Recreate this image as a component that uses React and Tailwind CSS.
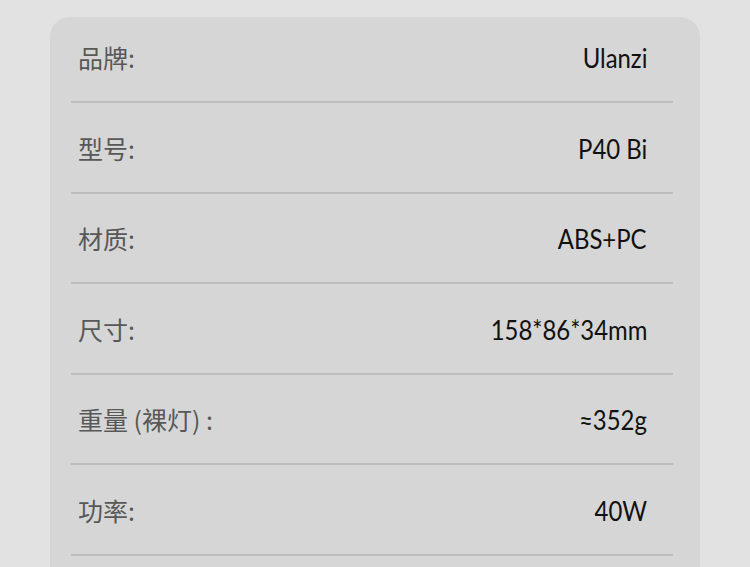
import React from "react";

const rows = [
  ["品牌:", "Ulanzi"],
  ["型号:", "P40 Bi"],
  ["材质:", "ABS+PC"],
  ["尺寸:", "158*86*34mm"],
  ["重量 (裸灯) :", "≈352g"],
  ["功率:", "40W"],
];

const pts = ["pt-0", "pt-[5px]", "pt-[4px]", "pt-[5px]", "pt-[4px]", "pt-[5px]"];

export default function App() {
  return (
    <div className="h-[567px] w-[750px] overflow-hidden bg-[#e2e2e2] pt-[17px] pl-[50px]">
      <div className="w-[650px] h-[620px] rounded-[20px] bg-[#d6d6d6] pl-[21px] pr-[27px]">
        {rows.map(([k, v], i) => (
          <div key={k} className={pts[i]}>
            <div className="h-[84px] flex items-center justify-between pl-[7px] pr-[26px]">
              <span
                className="text-[25px] text-[#585858] leading-none mb-[4px]"
                style={{ fontFamily: '"Noto Sans CJK SC", "Noto Sans", sans-serif' }}
              >
                {k}
              </span>
              <span
                className="inline-block text-[26px] text-[#111111] leading-none origin-right scale-x-[0.92] mb-[2px]"
                style={{ fontFamily: 'Lato, "Noto Sans", sans-serif' }}
              >
                {v}
              </span>
            </div>
            <div className="h-[2px] bg-[#bdbdbd]" />
          </div>
        ))}
      </div>
    </div>
  );
}
